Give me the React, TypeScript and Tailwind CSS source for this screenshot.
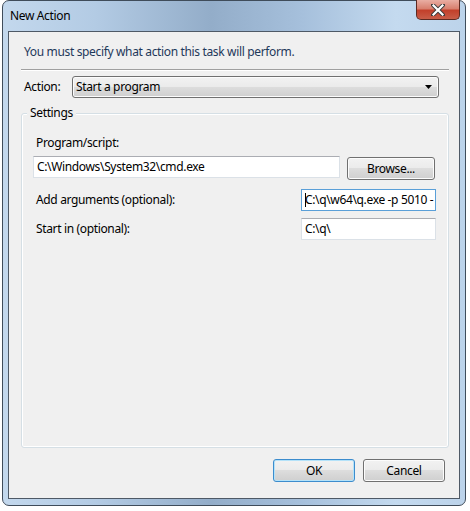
import React from 'react';

const font = 'font-["Segoe_UI","Noto_Sans","Liberation_Sans",sans-serif] tracking-[-0.35px]';

function Field({ value, focused, className }: { value: string; focused?: boolean; className: string }) {
  return (
    <div
      className={`h-[22px] bg-white border flex items-center pl-[3px] overflow-hidden whitespace-nowrap text-[12px] text-black ${
        focused ? 'border-[#5a9fd8]' : 'border-[#dbe1e7] border-t-[#abadb3]'
      } ${className}`}
    >
      {focused && <span className="w-px h-[14px] bg-black -mr-px" />}
      {value}
    </div>
  );
}

function Button({ label, focused, className }: { label: string; focused?: boolean; className: string }) {
  return (
    <div
      className={`h-[23px] rounded-[3px] border flex items-center justify-center text-[12px] text-black bg-[linear-gradient(#f2f2f2_0%,#ebebeb_48%,#dddddd_50%,#cfcfcf_100%)] ${
        focused ? 'border-[#3c8ccd] shadow-[inset_0_0_0_1px_#b4e2f9]' : 'border-[#707070] shadow-[inset_0_0_0_1px_#fcfcfc]'
      } ${className}`}
    >
      {label}
    </div>
  );
}

export default function App() {
  return (
    <div className={`w-[470px] h-[511px] bg-white overflow-hidden ${font}`}>
      <div className="ml-[2px] w-[464px] h-[506px] rounded-[7px] border border-[#3f4c5a] bg-[linear-gradient(90deg,#c3d8ed_0%,#b3cbe4_20%,#93adc9_45%,#a6c0dc_65%,#c4daef_85%,#bcd3ea_100%)] flex flex-col">
        {/* Title bar */}
        <div className="h-[30px] flex items-start shrink-0">
          <span className="ml-[7px] mt-[6px] text-[12px] text-black">New Action</span>
          <div className="ml-auto mr-[5px] -mt-px w-[44px] h-[20px] rounded-b-[5px] border border-[#5c2a22] border-t-0 bg-[linear-gradient(#e9aea3_0%,#d8806f_45%,#c2402b_55%,#c85d48_100%)] flex items-center justify-center">
            <svg width="14" height="12" viewBox="0 0 14 12">
              <path d="M2 1 L12 11 M12 1 L2 11" stroke="#3a3a3a" strokeWidth="4" strokeLinecap="round" />
              <path d="M2.5 1.5 L11.5 10.5 M11.5 1.5 L2.5 10.5" stroke="#ffffff" strokeWidth="2.2" strokeLinecap="square" />
            </svg>
          </div>
        </div>

        {/* Client area */}
        <div className="mx-[5px] mb-[6px] flex-1 border border-[#4e5966] bg-[#f0f0f0] flex flex-col text-[12px] text-black">
          <p className="ml-[15px] mt-[12px] leading-[15px] text-[#1e395b]">You must specify what action this task will perform.</p>
          <div className="ml-[12px] mt-[10px] w-[428px] h-[2px] border-t border-[#a0a0a0] border-b-white border-b" />

          <div className="flex items-center mt-[5px] h-[22px]">
            <span className="ml-[15px] w-[48px]">Action:</span>
            <div className="w-[367px] h-[22px] rounded-[3px] border border-[#707070] bg-[linear-gradient(#f2f2f2_0%,#ebebeb_48%,#dddddd_50%,#cfcfcf_100%)] shadow-[inset_0_0_0_1px_#fcfcfc] flex items-center pl-[3px]">
              <span>Start a program</span>
              <svg className="ml-auto mr-[5px]" width="8" height="4" viewBox="0 0 8 4">
                <path d="M0 0 H7 L3.5 4 Z" fill="#000" />
              </svg>
            </div>
          </div>

          {/* Settings group */}
          <div className="relative ml-[12px] mt-[15px] w-[428px] h-[335px] rounded-[3px] border border-[#d5dfe5] shadow-[inset_0_0_0_1px_#ffffff] flex flex-col">
            <span className="absolute -top-[9px] left-[5px] px-[3px] bg-[#f0f0f0] leading-[15px]">Settings</span>
            <span className="ml-[14px] mt-[21px] leading-[15px]">Program/script:</span>
            <div className="flex mt-[6px] items-start">
              <Field value="C:\Windows\System32\cmd.exe" className="ml-[11px] w-[307px]" />
              <Button label="Browse..." className="ml-[7px] mt-px w-[88px]" />
            </div>
            <div className="flex items-center mt-[9px]">
              <span className="ml-[14px]">Add arguments (optional):</span>
              <Field value="C:\q\w64\q.exe -p 5010 -" focused className="ml-auto mr-[12px] w-[135px] h-[21px]" />
            </div>
            <div className="flex items-center mt-[7px]">
              <span className="ml-[14px]">Start in (optional):</span>
              <Field value="C:\q\" className="ml-auto mr-[12px] w-[135px]" />
            </div>
          </div>

          <div className="flex mt-[11px] ml-[264px] gap-[8px]">
            <Button label="OK" focused className="w-[82px]" />
            <Button label="Cancel" className="w-[82px]" />
          </div>
        </div>
      </div>
    </div>
  );
}
